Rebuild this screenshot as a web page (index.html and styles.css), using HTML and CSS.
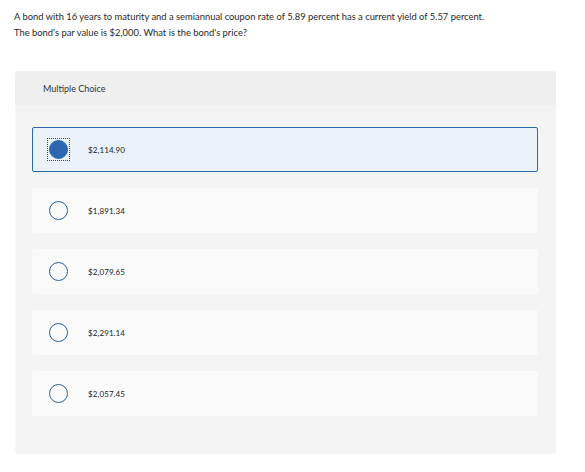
FILE: index.html
```html
<!DOCTYPE html>
<html>
<head>
<meta charset="utf-8">
<link rel="stylesheet" href="styles.css">
</head>
<body>
<div class="question">
  <p>A bond with 16 years to maturity and a semiannual coupon rate of 5.89 percent has a current yield of 5.57 percent.<br>The bond's par value is $2,000. What is the bond's price?</p>
</div>
<div class="panel">
  <div class="panel-head">Multiple Choice</div>
  <div class="options">
    <div class="option selected"><span class="radio"></span><span class="label">$2,114.90</span></div>
    <div class="option"><span class="radio"></span><span class="label">$1,891.34</span></div>
    <div class="option"><span class="radio"></span><span class="label">$2,079.65</span></div>
    <div class="option"><span class="radio"></span><span class="label">$2,291.14</span></div>
    <div class="option"><span class="radio"></span><span class="label">$2,057.45</span></div>
  </div>
</div>
</body>
</html>
```
FILE: styles.css
```css
html, body {
  margin: 0;
  padding: 0;
  background: #ffffff;
  font-family: "Lato", "Open Sans", sans-serif;
  color: #2a2a2a;
}
.question {
  padding: 9px 14px 0 14px;
  height: 62px;
}
.question p {
  margin: 0;
  font-size: 9.4px;
  line-height: 15.5px;
}
.panel {
  margin-left: 15px;
  width: 541px;
  height: 383px;
  background: #f4f4f4;
  border-radius: 2px;
}
.panel-head {
  height: 34px;
  background: #efefef;
  display: flex;
  align-items: center;
  padding-left: 28px;
  font-size: 9px;
  color: #333333;
  border-radius: 2px 2px 0 0;
}
.options {
  display: flex;
  flex-direction: column;
  gap: 16px;
  padding: 22px 18px 38px 17px;
}
.option {
  height: 45px;
  box-sizing: border-box;
  background: #fafafa;
  border-radius: 2px;
  display: flex;
  align-items: center;
  padding-left: 17px;
  font-size: 8px;
  color: #222222;
}
.option.selected {
  background: #eaf1f9;
  border: 1px solid #2f69ac;
  padding-left: 16px;
}
.radio {
  position: relative;
  width: 19px;
  height: 19px;
  box-sizing: border-box;
  border: 1.5px solid #2c5f9a;
  border-radius: 50%;
  margin-right: 20px;
  flex: none;
}
.selected .radio {
  background: #2b66ae;
  border-color: #2b66ae;
}
.selected .radio::after {
  content: "";
  position: absolute;
  left: -3px;
  top: -3px;
  right: -3px;
  bottom: -3px;
  border: 1px dotted #1f4f8a;
}
.label {
  letter-spacing: 0.1px;
}
```
